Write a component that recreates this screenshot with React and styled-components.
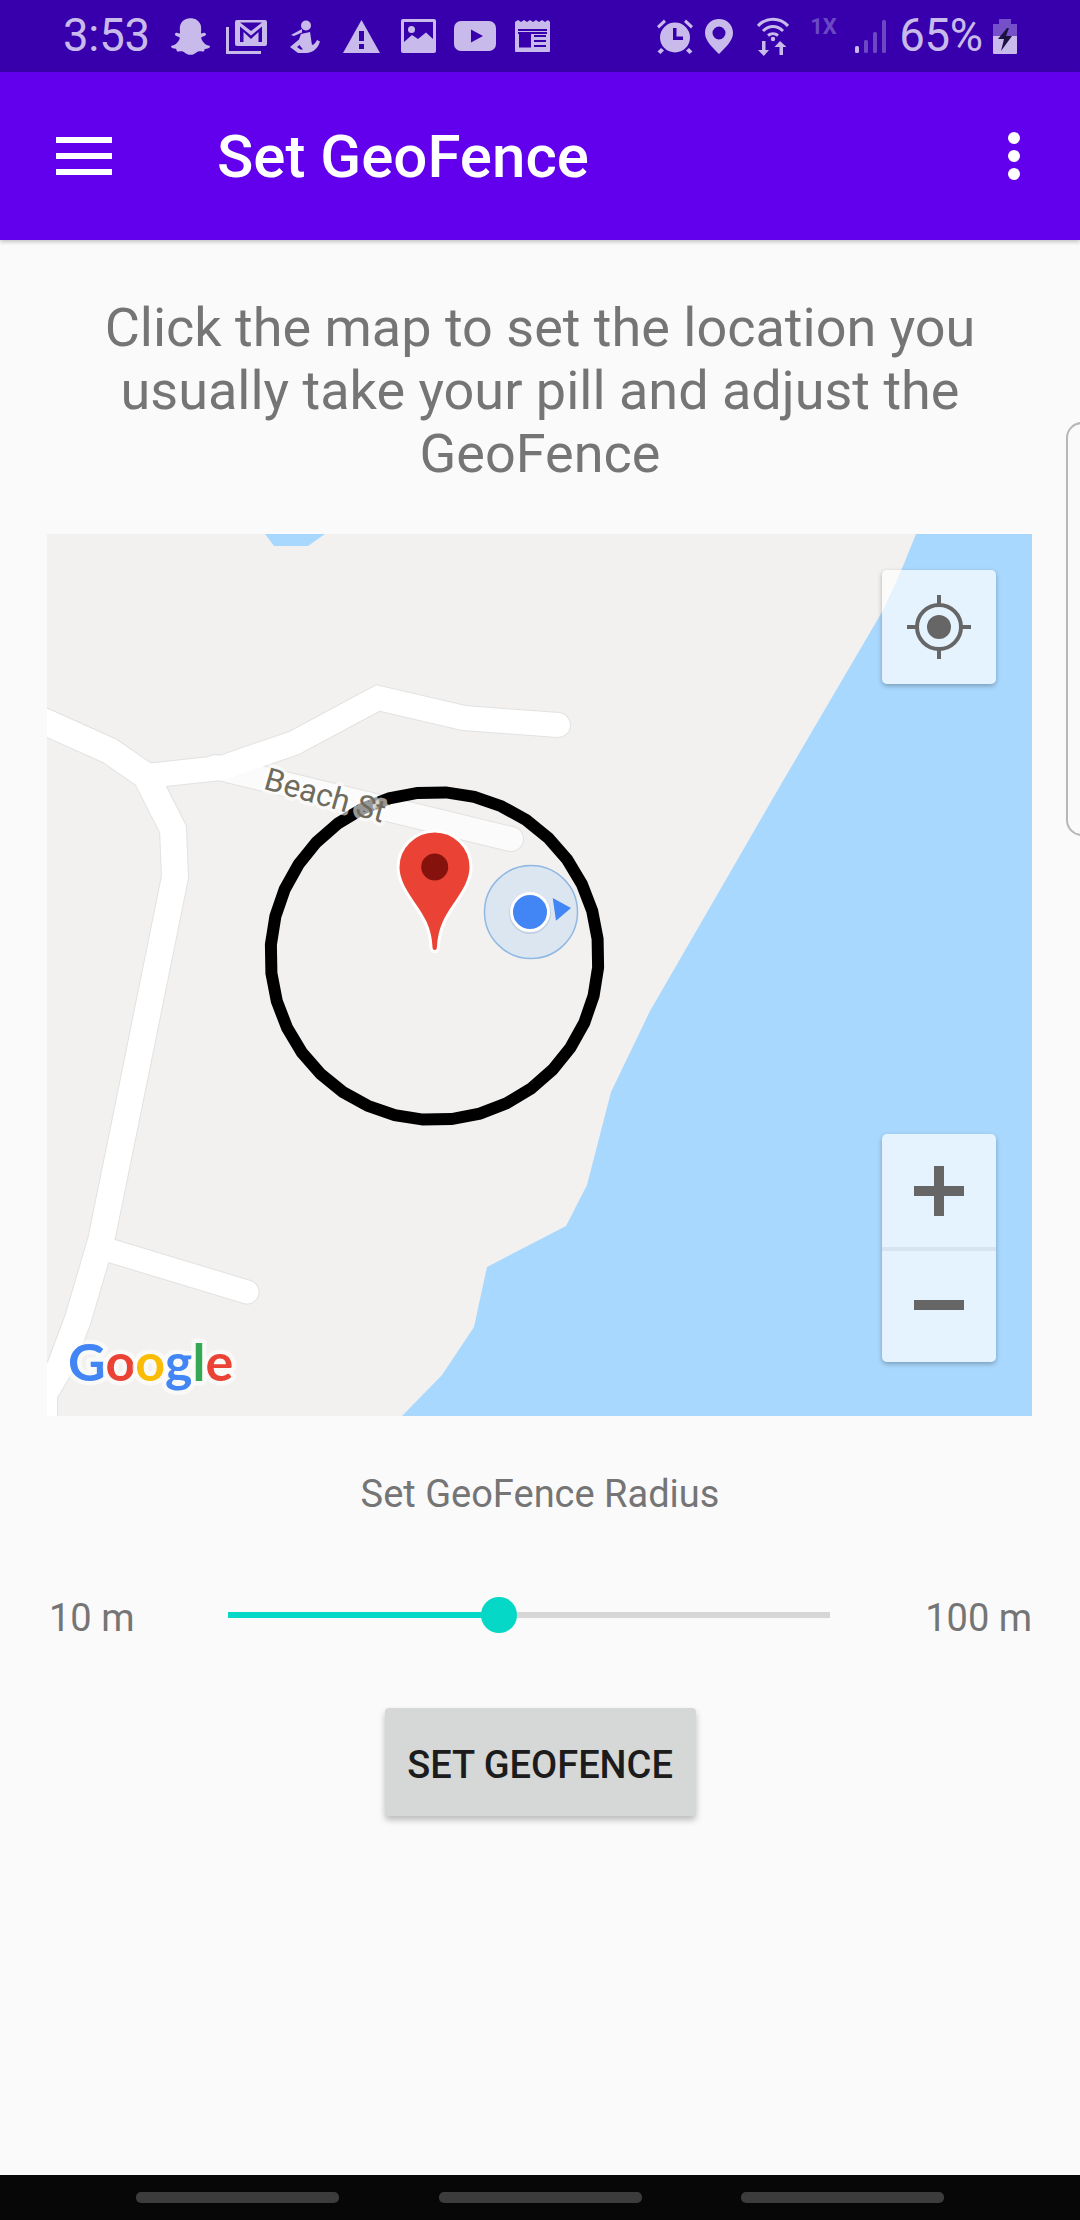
import styled, { createGlobalStyle } from "styled-components";
import { FaSnapchatGhost } from "react-icons/fa";

const GlobalStyle = createGlobalStyle`
  html, body {
    margin: 0;
    padding: 0;
    background: #fafafa;
    font-family: Roboto, "Liberation Sans", sans-serif;
  }
`;

const Page = styled.div`
  position: relative;
  width: 1080px;
  height: 2220px;
  display: flex;
  flex-direction: column;
  background: #fafafa;
  overflow: hidden;
`;

const StatusBar = styled.div`
  height: 72px;
  flex: none;
  display: flex;
  justify-content: space-between;
  align-items: center;
  padding: 0 63px 0 63px;
  background: #3800ac;
  color: #c8baea;
`;

const StatusGroup = styled.div`
  display: flex;
  align-items: center;
`;

const StatusText = styled.span`
  margin-left: ${({ $left }) => $left || 0}px;
  font-size: 45.5px;
  line-height: 72px;
  font-weight: 400;
  letter-spacing: -0.2px;
`;

const Glyph = styled.svg`
  display: block;
  flex: none;
  margin-left: ${({ $left }) => $left}px;
  fill: #c8baea;
`;

const Ghost = styled(FaSnapchatGhost)`
  display: block;
  flex: none;
  margin-left: ${({ $left }) => $left}px;
  color: #c8baea;
`;

const OneX = styled.span`
  width: 27px;
  margin-left: 21px;
  margin-top: -18px;
  font-size: 22px;
  line-height: 24px;
  font-weight: 700;
  color: #6c48c4;
`;

const AppBar = styled.header`
  position: relative;
  z-index: 2;
  height: 168px;
  flex: none;
  display: flex;
  align-items: center;
  padding: 0 60px 0 56px;
  background: #6200ee;
  box-shadow: 0 2px 4px rgba(0, 0, 0, 0.22);
`;

const Hamburger = styled.div`
  width: 56px;
  display: flex;
  flex-direction: column;
  gap: 10px;

  span {
    display: block;
    height: 6px;
    background: #fff;
  }
`;

const Title = styled.h1`
  flex: 1;
  margin: 2px 0 0 105px;
  font-size: 60px;
  line-height: 72px;
  font-weight: 500;
  color: #fff;
`;

const Overflow = styled.div`
  display: flex;
  flex-direction: column;
  gap: 6px;

  span {
    display: block;
    width: 12px;
    height: 12px;
    border-radius: 50%;
    background: #fff;
  }
`;

const Content = styled.main`
  flex: 1;
  display: flex;
  flex-direction: column;
  align-items: center;
`;

const Instructions = styled.p`
  margin: 56px 0 49px;
  font-size: 54px;
  line-height: 63px;
  text-align: center;
  color: #757575;
`;

const MapBox = styled.div`
  position: relative;
  align-self: flex-start;
  width: 985px;
  height: 882px;
  margin-left: 47px;
  background: #f2f1ef;
`;

const MapSvg = styled.svg`
  display: block;
`;

const RoadCase = styled.polyline`
  fill: none;
  stroke: #e2e2e2;
  stroke-width: ${({ $w }) => $w + 2}px;
  stroke-linejoin: miter;
  stroke-linecap: round;
`;

const RoadFill = styled.polyline`
  fill: none;
  stroke: ${({ $color }) => $color};
  stroke-width: ${({ $w }) => $w}px;
  stroke-linejoin: miter;
  stroke-linecap: round;
`;

const StreetLabel = styled.text`
  font-family: Roboto, sans-serif;
  font-size: 31.5px;
  fill: #6f6b5d;
  stroke: rgba(255, 255, 255, 0.62);
  stroke-width: 7px;
  paint-order: stroke;
  stroke-linejoin: round;
`;

const GoogleMark = styled.text`
  font-family: Lato, Roboto, sans-serif;
  font-size: 52px;
  font-weight: 700;
  stroke: rgba(255, 255, 255, 0.55);
  stroke-width: 9px;
  paint-order: stroke;
  stroke-linejoin: round;
`;

const ControlCard = styled.div`
  position: absolute;
  left: 835px;
  top: ${({ $top }) => $top}px;
  width: 114px;
  display: flex;
  flex-direction: column;
  border-radius: 5px;
  background: rgba(255, 255, 255, 0.7);
  box-shadow: 0 2px 5px rgba(0, 0, 0, 0.28);
`;

const ControlCell = styled.div`
  height: 114px;
  display: flex;
  align-items: center;
  justify-content: center;
`;

const ControlDivider = styled.div`
  height: 4px;
  margin-top: -1px;
  margin-bottom: -3px;
  background: rgba(0, 0, 0, 0.06);
`;

const RadiusLabel = styled.div`
  margin-top: 54px;
  font-size: 38px;
  line-height: 48px;
  color: #757575;
`;

const SliderRow = styled.div`
  align-self: stretch;
  height: 60px;
  margin-top: 67px;
  padding: 0 48px 0 49px;
  display: flex;
  align-items: center;
`;

const RangeLabel = styled.span`
  margin-top: 5px;
  font-size: 38px;
  line-height: 48px;
  color: #757575;
  ${({ $end }) => ($end ? "flex: 1; text-align: right;" : "width: 179px;")}
`;

const Track = styled.div`
  position: relative;
  width: 602px;
  height: 6px;
  background: #d6d6d6;
`;

const TrackFill = styled.div`
  height: 100%;
  background: #05d8c6;
`;

const Thumb = styled.div`
  position: absolute;
  top: -15px;
  width: 36px;
  height: 36px;
  margin-left: -18px;
  border-radius: 50%;
  background: #05d8c6;
`;

const SetButton = styled.button`
  width: 311px;
  height: 108px;
  margin-top: 63px;
  padding: 5px 0 0;
  border: 0;
  border-radius: 4px;
  background: #d6d7d7;
  box-shadow: 0 4px 6px rgba(0, 0, 0, 0.25);
  font-family: Roboto, sans-serif;
  font-size: 38px;
  font-weight: 500;
  color: #1c1c1c;
`;

const NavBar = styled.nav`
  height: 45px;
  flex: none;
  display: flex;
  padding: 17px 136px 0;
  justify-content: space-between;
  box-sizing: border-box;
  background: #070707;
`;

const NavPill = styled.div`
  width: 203px;
  height: 11px;
  border-radius: 5px;
  background: #3c3c3c;
`;

const EdgeHandle = styled.div`
  position: absolute;
  left: 1066px;
  top: 422px;
  width: 30px;
  height: 410px;
  border: 2px solid #b7b7b7;
  border-radius: 16px;
`;

const LAND_ROADS = [
  { w: 24, color: "#fbfbfb", points: "215,768 511,840" },
  { w: 26, color: "#fff", points: "30,716 110,752 146,777 173,830 175,878 130,1100 101,1242 78,1320 60,1368 44,1395 44,1425" },
  { w: 24, color: "#fff", points: "146,777 221,769 294,744 378,699 464,719 558,726" },
  { w: 23, color: "#fff", points: "105,1250 247,1293" },
];

// the map draws its circle with straight segments, so the facets show
const RING_POINTS = Array.from({ length: 36 }, (_, i) => {
  const a = (i / 36) * Math.PI * 2 + 0.07;
  return `${(434.5 + 164 * Math.cos(a)).toFixed(1)},${(957 + 164 * Math.sin(a)).toFixed(1)}`;
}).join(" ");

const GeoMap = () => (
  <MapSvg width="985" height="882" viewBox="47 535 985 882">
    <rect x="47" y="535" width="985" height="882" fill="#f2f1ef" />
    <polygon
      fill="#a9d8fe"
      points="916,535 1032,535 1032,1417 402,1417 442,1376 474,1328 480,1300 487,1268 566,1227 587,1186 611,1093 650,1012 780,787 882,613 893,590 903,567"
    />
    <polygon fill="#a9d8fe" points="265,535 274,547 308,547 325,535" />
    {LAND_ROADS.map((r) => (
      <RoadCase key={r.points} points={r.points} $w={r.w} />
    ))}
    {LAND_ROADS.map((r) => (
      <RoadFill key={r.points} points={r.points} $w={r.w} $color={r.color} />
    ))}
    <polygon fill="none" stroke="#000" strokeWidth="12" points={RING_POINTS} />
    <StreetLabel x="325" y="807" textAnchor="middle" transform="rotate(16 325 797)">
      Beach St
    </StreetLabel>
    <path
      d="M434.7 832C414.5 832 398 848.5 398 868C398 880 404 890 412 902C420 914 430 926 431 948C431 954 438.4 954 438.4 948C439.4 926 449 914 457 902C465 890 471 880 471 868C471 848.5 455 832 434.7 832Z"
      fill="#ea4335"
      stroke="#fff"
      strokeWidth="3"
    />
    <circle cx="434.7" cy="868" r="13.5" fill="#86120e" />
    <circle cx="531" cy="913" r="46.5" fill="#dce6f1" stroke="#8fb9e4" strokeWidth="1.5" />
    <circle cx="530" cy="914" r="21" fill="#1a3a6a" opacity="0.12" />
    <circle cx="530" cy="913" r="18.5" fill="#4285f4" stroke="#fff" strokeWidth="3" />
    <polygon fill="#4285f4" points="552.7,899 571,909 556,921.7" />
    <GoogleMark x="68" y="1382">
      <tspan fill="#4285f4">G</tspan>
      <tspan fill="#ea4335">o</tspan>
      <tspan fill="#fbbc05">o</tspan>
      <tspan fill="#4285f4">g</tspan>
      <tspan fill="#34a853">l</tspan>
      <tspan fill="#ea4335">e</tspan>
    </GoogleMark>
  </MapSvg>
);

const Gmail = () => (
  <Glyph $left={16} width="42" height="35" viewBox="0 0 42 35">
    <path d="M1.5 8V33.5H35" fill="none" stroke="#c8baea" strokeWidth="3" />
    <rect x="9" y="1" width="32" height="26" rx="2" fill="#c8baea" />
    <path d="M14 7.5L25 16.5L36 7.5V23H32.5V13L25 20L17.5 13V23H14Z" fill="#3800ac" />
    <path d="M14 3.5H36L25 12Z" fill="#3800ac" />
  </Glyph>
);

const Figure = () => (
  <Glyph $left={22} width="30" height="33" viewBox="0 0 30 33">
    <circle cx="16" cy="5.5" r="5" />
    <path d="M12 9L1 15L4 16L12 12.5Z" />
    <path d="M11 14L20 12C21 17 21 20 22 25C24 24.5 25.5 23 27 20L30 21.5C28 28 24 32 17 33H8L0 27L9 19.5Z" />
    <path d="M9.5 25L7 27L10.5 29.5H13Z" fill="#3800ac" />
  </Glyph>
);

const Warning = () => (
  <Glyph $left={23} width="37" height="33" viewBox="0 0 37 33">
    <path d="M18.5 0L37 33H0Z" />
    <path d="M16 11H21V21H16ZM16 24H21V29H16Z" fill="#3800ac" />
  </Glyph>
);

const ImageIcon = () => (
  <Glyph $left={21} width="35" height="34" viewBox="0 0 35 34">
    <rect width="35" height="34" rx="2" />
    <rect x="3" y="3" width="29" height="20" fill="#3800ac" />
    <circle cx="10.5" cy="10.5" r="3.5" />
    <path d="M3 23L11 16L17 20L25 13.5L32 20V26H3Z" />
  </Glyph>
);

const YouTube = () => (
  <Glyph $left={18} width="42" height="30" viewBox="0 0 42 30">
    <rect width="42" height="30" rx="7" />
    <path d="M17 8.5L29 15L17 21.5Z" fill="#3800ac" />
  </Glyph>
);

const News = () => (
  <Glyph $left={19} width="35" height="32" viewBox="0 0 35 32">
    <path d="M0 2L3 0L6 2L9 0L12 2L15 0L18 2L21 0L24 2L27 0L30 2L33 0L35 2V31A1 1 0 0 1 34 32H1A1 1 0 0 1 0 31Z" />
    <path d="M3 9H32V11H3Z" fill="#3800ac" />
    <path d="M4 14H16V27.5H4Z M19 15H31V17H19Z M19 20H31V22H19Z M19 25H31V27H19Z" fill="#3800ac" />
    <path d="M3 12H32V14H3Z" fill="#3800ac" />
  </Glyph>
);

const Alarm = () => (
  <Glyph $left={0} width="38" height="35" viewBox="0 0 38 35">
    <circle cx="19" cy="18.5" r="15" />
    <path d="M1 7L8 0.5L10 3L3 9.5ZM37 7L30 0.5L28 3L35 9.5Z" />
    <path d="M5 29L8 31.5L4.5 35L1.5 32.5ZM33 29L30 31.5L33.5 35L36.5 32.5Z" />
    <path d="M17 9H20.5V17.5H27V21H17Z" fill="#3800ac" />
  </Glyph>
);

const Pin = () => (
  <Glyph $left={11} width="28" height="35" viewBox="0 0 28 35">
    <path fillRule="evenodd" d="M14 0C6 0 0 6 0 14C0 22 8 29 14 35C20 29 28 22 28 14C28 6 22 0 14 0ZM14 7.5A6.5 6.5 0 1 1 14 20.5A6.5 6.5 0 0 1 14 7.5Z" />
  </Glyph>
);

const Wifi = () => (
  <Glyph $left={24} width="32" height="39" viewBox="0 0 32 39">
    <g fill="none" stroke="#c8baea" strokeWidth="3">
      <path d="M1 9C9 0 23 0 31 9" />
      <path d="M6 14C12 8 20 8 26 14" />
      <path d="M11 18.5C14 16 18 16 21 18.5" />
    </g>
    <circle cx="16" cy="22" r="2.2" />
    <path d="M5 24H8.5V33H12L6.8 39L1 33H5Z" />
    <path d="M23 24L29.5 30H26V38H22.5V30H17.5Z" />
  </Glyph>
);

const Signal = () => (
  <Glyph $left={18} width="31" height="33" viewBox="0 0 31 33">
    <rect x="0" y="26" width="4" height="7" rx="1.5" />
    <rect x="9" y="20" width="4" height="13" rx="1.5" fill="#6c48c4" />
    <rect x="18" y="12" width="4" height="21" rx="1.5" fill="#6c48c4" />
    <rect x="27" y="0" width="4" height="33" rx="1.5" fill="#6c48c4" />
  </Glyph>
);

const Battery = () => (
  <Glyph $left={10} width="24" height="35" viewBox="0 0 24 35">
    <path d="M6 0H18V5H24V17H0V5H6Z" fill="#7550c9" />
    <path d="M0 17H24V34A1 1 0 0 1 23 35H1A1 1 0 0 1 0 34Z" />
    <path d="M14 9L5 20H11L8 32L19 17H13L16 9Z" fill="#1c1240" />
  </Glyph>
);

const Crosshair = () => (
  <svg width="64" height="64" viewBox="0 0 64 64">
    <g stroke="#666" strokeWidth="4" fill="none">
      <circle cx="32" cy="32" r="22" />
      <path d="M32 0V10M32 54V64M0 32H10M54 32H64" />
    </g>
    <circle cx="32" cy="32" r="12" fill="#666" />
  </svg>
);

const Plus = () => (
  <svg width="50" height="50" viewBox="0 0 50 50">
    <path d="M20 0H30V20H50V30H30V50H20V30H0V20H20Z" fill="#666" />
  </svg>
);

const Minus = () => (
  <svg width="50" height="10" viewBox="0 0 50 10">
    <rect width="50" height="10" fill="#666" />
  </svg>
);

const App = () => (
  <Page>
    <GlobalStyle />
    <StatusBar>
      <StatusGroup>
        <StatusText>3:53</StatusText>
        <Ghost $left={21} size={39} />
        <Gmail />
        <Figure />
        <Warning />
        <ImageIcon />
        <YouTube />
        <News />
      </StatusGroup>
      <StatusGroup>
        <Alarm />
        <Pin />
        <Wifi />
        <OneX>1X</OneX>
        <Signal />
        <StatusText $left={13}>65%</StatusText>
        <Battery />
      </StatusGroup>
    </StatusBar>
    <AppBar>
      <Hamburger>
        <span />
        <span />
        <span />
      </Hamburger>
      <Title>Set GeoFence</Title>
      <Overflow>
        <span />
        <span />
        <span />
      </Overflow>
    </AppBar>
    <Content>
      <Instructions>
        Click the map to set the location you
        <br />
        usually take your pill and adjust the
        <br />
        GeoFence
      </Instructions>
      <MapBox>
        <GeoMap />
        <ControlCard $top={36}>
          <ControlCell>
            <Crosshair />
          </ControlCell>
        </ControlCard>
        <ControlCard $top={600}>
          <ControlCell>
            <Plus />
          </ControlCell>
          <ControlDivider />
          <ControlCell>
            <Minus />
          </ControlCell>
        </ControlCard>
      </MapBox>
      <RadiusLabel>Set GeoFence Radius</RadiusLabel>
      <SliderRow>
        <RangeLabel>10 m</RangeLabel>
        <Track>
          <TrackFill style={{ width: "45%" }} />
          <Thumb style={{ left: "45%" }} />
        </Track>
        <RangeLabel $end>100 m</RangeLabel>
      </SliderRow>
      <SetButton>SET GEOFENCE</SetButton>
    </Content>
    <NavBar>
      <NavPill />
      <NavPill />
      <NavPill />
    </NavBar>
    <EdgeHandle />
  </Page>
);

export default App;
